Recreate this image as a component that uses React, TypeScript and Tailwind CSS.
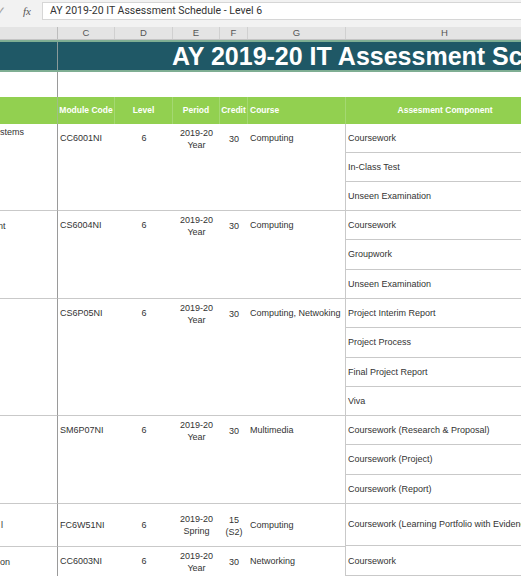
import React from "react";

type Group = {
  b: string;
  bPad: string;
  code: string;
  period: [string, string];
  credit: [string, string?];
  course: string;
  items: string[];
  heights: string[];
};

const groups: Group[] = [
  { b: "stems", bPad: "pt-[2px]", code: "CC6001NI", period: ["2019-20", "Year"], credit: ["30"], course: "Computing", items: ["Coursework", "In-Class Test", "Unseen Examination"], heights: ["h-[29px]", "h-[29px]", "h-[29px]"] },
  { b: "nt", bPad: "pt-[9px] -ml-[2px]", code: "CS6004NI", period: ["2019-20", "Year"], credit: ["30"], course: "Computing", items: ["Coursework", "Groupwork", "Unseen Examination"], heights: ["h-[29px]", "h-[30px]", "h-[29px]"] },
  { b: "", bPad: "", code: "CS6P05NI", period: ["2019-20", "Year"], credit: ["30"], course: "Computing, Netwoking", items: ["Project Interim Report", "Project Process", "Final Project Report", "Viva"], heights: ["h-[29px]", "h-[30px]", "h-[29px]", "h-[29px]"] },
  { b: "", bPad: "", code: "SM6P07NI", period: ["2019-20", "Year"], credit: ["30"], course: "Multimedia", items: ["Coursework (Research & Proposal)", "Coursework (Project)", "Coursework (Report)"], heights: ["h-[29px]", "h-[30px]", "h-[29px]"] },
  { b: "l", bPad: "pt-[15px] pl-[1px]", code: "FC6W51NI", period: ["2019-20", "Spring"], credit: ["15", "(S2)"], course: "Computing", items: ["Coursework (Learning Portfolio with Evidence)"], heights: ["h-[42px]"] },
  { b: "on", bPad: "pt-[9px]", code: "CC6003NI", period: ["2019-20", "Year"], credit: ["30"], course: "Networking", items: ["Coursework"], heights: ["h-[29px]"] },
];

const line = "border-b border-[#c9c9c9]";

function DataGroup({ g }: { g: Group }) {
  const first = g.heights[0];
  return (
    <div className="flex text-[9px] text-[#333]">
      <div className={`w-[58px] shrink-0 border-r border-r-[#9a9a9a] ${line} overflow-hidden`}>
        <div className={`whitespace-nowrap ${g.bPad}`}>{g.b}</div>
      </div>
      <div className={`w-[57px] shrink-0 ${line}`}>
        <div className={`${first} flex items-center pl-[2px] pt-[1px]`}>{g.code}</div>
      </div>
      <div className={`w-[58px] shrink-0 ${line}`}>
        <div className={`${first} flex items-center justify-center pt-[1px]`}>6</div>
      </div>
      <div className={`w-[47px] shrink-0 ${line}`}>
        <div className={`${first} flex flex-col items-center justify-center leading-[12px]`}>
          <span>{g.period[0]}</span>
          <span>{g.period[1]}</span>
        </div>
      </div>
      <div className={`w-[28px] shrink-0 ${line}`}>
        <div className={`${first} flex flex-col items-center justify-center leading-[12px] pt-[1px]`}>
          <span>{g.credit[0]}</span>
          {g.credit[1] && <span>{g.credit[1]}</span>}
        </div>
      </div>
      <div className={`w-[98px] shrink-0 border-r border-r-[#c9c9c9] ${line}`}>
        <div className={`${first} flex items-center pl-[2px] pt-[1px] whitespace-nowrap`}>{g.course}</div>
      </div>
      <div className="w-[198px] shrink-0 flex flex-col">
        {g.items.map((item, i) => (
          <div key={item} className={`${g.heights[i]} ${line} flex items-center pl-[2px] pt-[1px] whitespace-nowrap overflow-hidden`}>
            {item}
          </div>
        ))}
      </div>
    </div>
  );
}

export default function App() {
  const letters: [string, string][] = [
    ["C", "w-[57px]"],
    ["D", "w-[58px]"],
    ["E", "w-[47px]"],
    ["F", "w-[28px]"],
    ["G", "w-[98px]"],
    ["H", "w-[198px]"],
  ];

  return (
    <div className="w-[521px] h-[576px] overflow-hidden bg-white font-['Liberation_Sans',Arial,sans-serif]">
      <div className="w-[600px]">
        {/* formula bar */}
        <div className="h-[27px] bg-[#f2f2f2] pt-[2px] flex items-start">
          <div className="w-[42px] h-[18px] flex items-center shrink-0">
            <span className="-ml-[4px] text-[12px] text-[#a0a0a0]">✓</span>
            <span className="ml-[17px] text-[11px] italic text-[#555] font-['Liberation_Serif',serif]">fx</span>
          </div>
          <div className="h-[18px] flex-1 bg-white border border-[#d6d6d6] flex items-center pl-[7px] text-[10.5px] text-[#333] whitespace-nowrap font-['Roboto',sans-serif]">
            AY 2019-20 IT Assessment Schedule - Level 6
          </div>
        </div>

        {/* column letters */}
        <div className="h-[13px] flex bg-[#e4e4e4] border-b border-[#c4c4c4] text-[9.5px] text-[#555]">
          <div className="w-[58px] shrink-0 border-r border-[#bdbdbd]" />
          {letters.map(([l, w]) => (
            <div key={l} className={`${w} shrink-0 border-r border-[#d0d0d0] flex items-center justify-center`}>
              {l}
            </div>
          ))}
        </div>

        {/* title banner */}
        <div className="h-[32px] flex bg-[#1f5866] border-y-2 border-[#7fae93]">
          <div className="w-[58px] shrink-0 border-r border-[#8a9a9a]" />
          <div className="pl-[114px] flex items-center whitespace-nowrap text-[25px] font-bold text-white leading-none">
            AY 2019-20 IT Assessment Schedule - Level 6
          </div>
        </div>

        {/* empty row */}
        <div className="h-[25px] flex">
          <div className="w-[58px] shrink-0 border-r border-[#9a9a9a]" />
        </div>

        {/* header row */}
        <div className="h-[27px] flex bg-[#92d050] text-white font-bold text-[8.5px]">
          <div className="w-[58px] shrink-0 border-r border-[#9fbf86]" />
          <div className="w-[57px] shrink-0 border-r border-[#a4d872] flex items-center justify-center whitespace-nowrap">Module Code</div>
          <div className="w-[58px] shrink-0 border-r border-[#a4d872] flex items-center justify-center">Level</div>
          <div className="w-[47px] shrink-0 border-r border-[#a4d872] flex items-center justify-center">Period</div>
          <div className="w-[28px] shrink-0 border-r border-[#a4d872] flex items-center justify-center">Credit</div>
          <div className="w-[98px] shrink-0 border-r border-[#a4d872] flex items-center pl-[2px]">Course</div>
          <div className="w-[198px] shrink-0 flex items-center justify-center whitespace-nowrap">Assesment Component</div>
        </div>

        {groups.map((g) => (
          <DataGroup key={g.code} g={g} />
        ))}
      </div>
    </div>
  );
}
